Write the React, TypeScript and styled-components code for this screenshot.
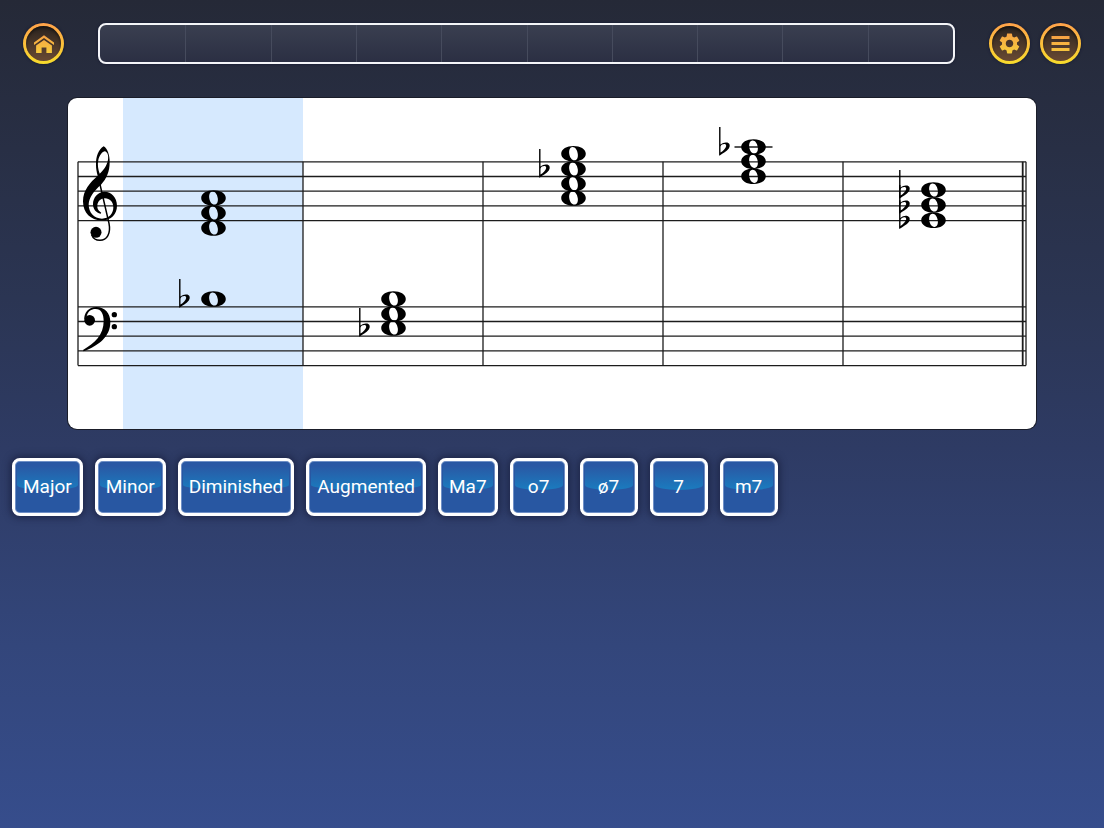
import React from "react";
import styled, { createGlobalStyle, css } from "styled-components";
import { MdSettings } from "react-icons/md";

const GlobalStyle = createGlobalStyle`
  * { box-sizing: border-box; }
  body {
    margin: 0;
    min-height: 100vh;
    background: linear-gradient(#252937 0%, #2b3553 36%, #2e3b64 54%, #33467b 78%, #364d8c 100%) no-repeat;
    font-family: Roboto, "Liberation Sans", sans-serif;
  }
`;

const Page = styled.div`
  display: flex;
  flex-direction: column;
`;

const TopBar = styled.header`
  display: flex;
  align-items: center;
  gap: 34px;
  padding: 23px 23px 0;
`;

const Actions = styled.div`
  display: flex;
  gap: 10px;
`;

const RoundButton = styled.button`
  display: grid;
  place-items: center;
  flex: none;
  width: 41px;
  height: 41px;
  padding: 0;
  border: 3px solid transparent;
  border-radius: 50%;
  background:
    linear-gradient(#29231f, #6a4a33) padding-box,
    linear-gradient(#ffa24a, #f8dc2c) border-box;
  box-shadow: 0 0 2px 1px #1c2136, inset 0 2px 3px rgba(0, 0, 0, 0.5);
  cursor: pointer;

  svg { display: block; }
  path:not([fill="none"]), rect { fill: url(#gold); }
`;

const Progress = styled.div`
  display: grid;
  grid-template-columns: repeat(10, 1fr);
  flex: 1;
  height: 41px;
  border: 2px solid #f4f5f8;
  border-radius: 8px;
  background: linear-gradient(#3a3f50, #2b2f43);
  box-shadow: 0 0 2px 1px #1c2136;
  overflow: hidden;
`;

const Segment = styled.span`
  & + & { border-left: 1px solid #464b5d; }
`;

const ScoreCard = styled.main`
  margin: 34px 68px 0;
  border-radius: 9px;
  background: #fff;
  box-shadow: 0 0 0 1px #1a1d29;
  overflow: hidden;

  svg { display: block; width: 100%; height: auto; }
`;

const Answers = styled.section`
  display: flex;
  flex-wrap: wrap;
  gap: 12px;
  padding: 29px 12px 12px;
`;

const gloss = css`
  &::before {
    content: "";
    position: absolute;
    inset: 2px 2px auto;
    height: 27px;
    border-radius: 3px 3px 50% 50% / 3px 3px 5px 5px;
    background: linear-gradient(#2a58a4 10%, #1a7cbf);
  }
`;

const AnswerButton = styled.button`
  position: relative;
  min-width: 58px;
  height: 58px;
  padding: 0 8px;
  border: 3px solid #fff;
  border-radius: 8px;
  background: #2857a2;
  box-shadow: inset 0 0 0 1px #6f8fc6, 0 0 7px 2px rgba(18, 24, 52, 0.6);
  color: #fff;
  font: 400 19px/24px Roboto, "Liberation Sans", sans-serif;
  cursor: pointer;
  ${gloss}
`;

const Label = styled.span`
  position: relative;
`;

const GAP = 14.7;
const TREBLE_TOP = 63.8;
const BASS_TOP = 208.8;
const BARLINES = [10, 235, 415, 595, 775];

type Chord = { x: number; notes: number[]; flats: number[]; ledger?: number };

const CHORDS: Chord[] = [
  { x: 145.5, notes: [100, 115, 130, 201], flats: [201] },
  { x: 325.5, notes: [201, 216, 230], flats: [230] },
  { x: 505.5, notes: [55.7, 71, 85.7, 100], flats: [71] },
  { x: 685.5, notes: [49, 63.3, 78.3], flats: [49], ledger: 49 },
  { x: 865.5, notes: [92, 107, 122.3], flats: [92, 107, 122.3] },
];

const WholeNote = ({ x, y }: { x: number; y: number }) => (
  <path
    transform={`translate(${x} ${y})`}
    fillRule="evenodd"
    d="M-12.3 0C-12.3 -4.9 -6.7 -7.8 0 -7.8S12.3 -4.9 12.3 0S6.7 7.8 0 7.8S-12.3 4.9 -12.3 0Z
       M-1 -6.6C-3.6 -6.4 -4.7 -3.6 -4.3 -0.2C-3.8 3.8 -1.6 6.7 0.9 6.6C3.7 6.4 4.7 3.6 4.3 0.2C3.8 -3.8 1.6 -6.7 -1 -6.6Z"
  />
);

const Flat = ({ x, y }: { x: number; y: number }) => (
  <path
    transform={`translate(${x} ${y})`}
    fillRule="evenodd"
    d="M-0.7 -20H0.7V-2.4C2.6 -4.2 5.4 -5 7.6 -4.4C10.2 -3.6 10.6 -0.8 9 1.6C7 4.6 3 6 0 8.4H-0.7Z
       M0.7 5.6C3.4 3.8 6 1.4 6.4 -1C6.6 -3.4 4 -3.6 2.2 -2.4C1.2 -1.6 0.7 -0.9 0.7 0.2Z"
  />
);

const TrebleClef = () => (
  <g transform="translate(-8 -8) scale(0.33333)">
    <path
      fillRule="evenodd"
      d="M131 169C116 178 107 200 108 224C108 236 110 246 113 257C90 278 69 300 69 334C69 370 94 392 126 391
         C154 391 171 372 171 347C171 322 154 305 134 305C114 305 99 322 99 343C99 357 108 369 122 371
         C124 370 124 368 122 367C114 362 111 355 112 346C113 334 122 325 135 325C149 325 160 336 160 352
         C160 372 146 386 126 386C102 386 86 368 86 343C87 321 102 303 123 284C140 266 149 244 149 216
         C149 196 143 176 131 169Z
         M135 184C143 187 146 198 144 209C140 229 130 241 119 251C114 237 112 224 115 210C118 197 127 184 135 184Z"
    />
    <path d="M119 279L147 400C153 430 141 451 120 451C108 451 99 445 95 434" fill="none" stroke="#000" strokeWidth="4.5" />
    <circle cx="108" cy="427" r="16.5" />
  </g>
);

const BassClef = () => (
  <g transform="translate(-8 172) scale(0.33333)">
    <path
      d="M73 150C71 128 86 111 109 111C135 111 151 130 151 156C151 200 117 226 71 244L69 240
         C104 218 131 196 131 153C131 131 123 117 107 117C93 117 84 123 80 139Z"
    />
    <circle cx="89" cy="151" r="16" />
    <circle cx="163" cy="134" r="8" />
    <circle cx="163" cy="170" r="8" />
  </g>
);

const Staff = ({ top }: { top: number }) => (
  <>
    {[0, 1, 2, 3, 4].map((i) => (
      <line key={i} x1="10" x2="958" y1={top + i * GAP} y2={top + i * GAP} />
    ))}
  </>
);

const Score = () => (
  <svg viewBox="0 0 968 331" role="img" aria-label="Grand staff with five chords">
    <rect x="55" width="180" height="331" fill="#d6e9fe" />
    <g stroke="#1c1c1c" strokeWidth="1.3">
      <Staff top={TREBLE_TOP} />
      <Staff top={BASS_TOP} />
      {BARLINES.map((x) => (
        <line key={x} x1={x} x2={x} y1="63.8" y2="267.6" />
      ))}
      <line x1="954.7" x2="954.7" y1="63.8" y2="267.6" strokeWidth="1.8" />
      <line x1="958" x2="958" y1="63.8" y2="267.6" />
    </g>
    <TrebleClef />
    <BassClef />
    {CHORDS.map((chord) => (
      <g key={chord.x}>
        {chord.ledger && (
          <line
            x1={chord.x - 19}
            x2={chord.x + 19}
            y1={chord.ledger}
            y2={chord.ledger}
            stroke="#1c1c1c"
            strokeWidth="1.3"
          />
        )}
        {chord.notes.map((y) => (
          <WholeNote key={y} x={chord.x} y={y} />
        ))}
        {chord.flats.map((y) => (
          <Flat key={y} x={chord.x - 33.7} y={y} />
        ))}
      </g>
    ))}
  </svg>
);

const GradientDefs = styled.svg`
  position: absolute;
  width: 0;
  height: 0;
`;

const GoldGradient = () => (
  <GradientDefs aria-hidden="true">
    <defs>
      <linearGradient id="gold" gradientUnits="userSpaceOnUse" x1="0" y1="0" x2="0" y2="22">
        <stop offset="0" stopColor="#f79d45" />
        <stop offset="1" stopColor="#f6cf3c" />
      </linearGradient>
    </defs>
  </GradientDefs>
);

const HomeIcon = () => (
  <svg width="22" height="22" viewBox="0 0 22 22" aria-hidden="true">
    <path d="M11 2.2L21 9.4V12L11 5L1 12V9.4Z" />
    <path d="M11 7L18.9 12.6V20H13.4V14.6H8.6V20H3.1V12.6Z" />
  </svg>
);

const MenuIcon = () => (
  <svg width="19" height="19" viewBox="0 0 19 19" aria-hidden="true">
    <rect x="0.5" y="2" width="18" height="3" />
    <rect x="0.5" y="8" width="18" height="3" />
    <rect x="0.5" y="14" width="18" height="3" />
  </svg>
);

const ANSWERS = ["Major", "Minor", "Diminished", "Augmented", "Ma7", "o7", "ø7", "7", "m7"];

export default function App() {
  return (
    <Page>
      <GlobalStyle />
      <GoldGradient />
      <TopBar>
        <RoundButton type="button" aria-label="Home">
          <HomeIcon />
        </RoundButton>
        <Progress role="progressbar" aria-label="Progress" aria-valuemin={0} aria-valuemax={10} aria-valuenow={0}>
          {Array.from({ length: 10 }, (_, i) => (
            <Segment key={i} />
          ))}
        </Progress>
        <Actions>
          <RoundButton type="button" aria-label="Settings">
            <MdSettings size={25} />
          </RoundButton>
          <RoundButton type="button" aria-label="Menu">
            <MenuIcon />
          </RoundButton>
        </Actions>
      </TopBar>
      <ScoreCard>
        <Score />
      </ScoreCard>
      <Answers aria-label="Chord qualities">
        {ANSWERS.map((answer) => (
          <AnswerButton key={answer} type="button">
            <Label>{answer}</Label>
          </AnswerButton>
        ))}
      </Answers>
    </Page>
  );
}
